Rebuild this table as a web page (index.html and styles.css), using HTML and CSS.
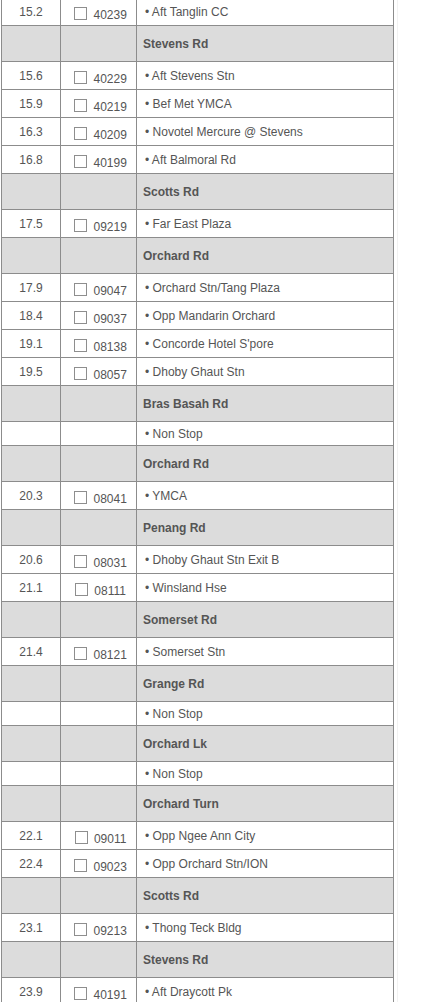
FILE: index.html
```html
<!DOCTYPE html>
<html>
<head>
<meta charset="utf-8">
<link rel="stylesheet" href="styles.css">
</head>
<body>
<div class="wrap">
<table class="route">
<colgroup><col class="c1"><col class="c2"><col class="c3"></colgroup>
<tbody>
<tr class="stop"><td class="km">15.2</td><td class="code"><span class="cb"></span> 40239</td><td class="name">• Aft Tanglin CC</td></tr>
<tr class="road"><td></td><td></td><td class="rname">Stevens Rd</td></tr>
<tr class="stop"><td class="km">15.6</td><td class="code"><span class="cb"></span> 40229</td><td class="name">• Aft Stevens Stn</td></tr>
<tr class="stop"><td class="km">15.9</td><td class="code"><span class="cb"></span> 40219</td><td class="name">• Bef Met YMCA</td></tr>
<tr class="stop"><td class="km">16.3</td><td class="code"><span class="cb"></span> 40209</td><td class="name">• Novotel Mercure @ Stevens</td></tr>
<tr class="stop"><td class="km">16.8</td><td class="code"><span class="cb"></span> 40199</td><td class="name">• Aft Balmoral Rd</td></tr>
<tr class="road"><td></td><td></td><td class="rname">Scotts Rd</td></tr>
<tr class="stop"><td class="km">17.5</td><td class="code"><span class="cb"></span> 09219</td><td class="name">• Far East Plaza</td></tr>
<tr class="road"><td></td><td></td><td class="rname">Orchard Rd</td></tr>
<tr class="stop"><td class="km">17.9</td><td class="code"><span class="cb"></span> 09047</td><td class="name">• Orchard Stn/Tang Plaza</td></tr>
<tr class="stop"><td class="km">18.4</td><td class="code"><span class="cb"></span> 09037</td><td class="name">• Opp Mandarin Orchard</td></tr>
<tr class="stop"><td class="km">19.1</td><td class="code"><span class="cb"></span> 08138</td><td class="name">• Concorde Hotel S'pore</td></tr>
<tr class="stop"><td class="km">19.5</td><td class="code"><span class="cb"></span> 08057</td><td class="name">• Dhoby Ghaut Stn</td></tr>
<tr class="road"><td></td><td></td><td class="rname">Bras Basah Rd</td></tr>
<tr class="nonstop"><td></td><td></td><td class="name">• Non Stop</td></tr>
<tr class="road"><td></td><td></td><td class="rname">Orchard Rd</td></tr>
<tr class="stop"><td class="km">20.3</td><td class="code"><span class="cb"></span> 08041</td><td class="name">• YMCA</td></tr>
<tr class="road"><td></td><td></td><td class="rname">Penang Rd</td></tr>
<tr class="stop"><td class="km">20.6</td><td class="code"><span class="cb"></span> 08031</td><td class="name">• Dhoby Ghaut Stn Exit B</td></tr>
<tr class="stop"><td class="km">21.1</td><td class="code"><span class="cb"></span> 08111</td><td class="name">• Winsland Hse</td></tr>
<tr class="road"><td></td><td></td><td class="rname">Somerset Rd</td></tr>
<tr class="stop"><td class="km">21.4</td><td class="code"><span class="cb"></span> 08121</td><td class="name">• Somerset Stn</td></tr>
<tr class="road"><td></td><td></td><td class="rname">Grange Rd</td></tr>
<tr class="nonstop"><td></td><td></td><td class="name">• Non Stop</td></tr>
<tr class="road"><td></td><td></td><td class="rname">Orchard Lk</td></tr>
<tr class="nonstop"><td></td><td></td><td class="name">• Non Stop</td></tr>
<tr class="road"><td></td><td></td><td class="rname">Orchard Turn</td></tr>
<tr class="stop"><td class="km">22.1</td><td class="code"><span class="cb"></span> 09011</td><td class="name">• Opp Ngee Ann City</td></tr>
<tr class="stop"><td class="km">22.4</td><td class="code"><span class="cb"></span> 09023</td><td class="name">• Opp Orchard Stn/ION</td></tr>
<tr class="road"><td></td><td></td><td class="rname">Scotts Rd</td></tr>
<tr class="stop"><td class="km">23.1</td><td class="code"><span class="cb"></span> 09213</td><td class="name">• Thong Teck Bldg</td></tr>
<tr class="road"><td></td><td></td><td class="rname">Stevens Rd</td></tr>
<tr class="stop"><td class="km">23.9</td><td class="code"><span class="cb"></span> 40191</td><td class="name">• Aft Draycott Pk</td></tr>
</tbody>
</table>
</div>
</body>
</html>
```

FILE: styles.css
```css
html, body {
  margin: 0;
  padding: 0;
  background: #ffffff;
}

body {
  font-family: "Liberation Sans", Arial, sans-serif;
  font-size: 12px;
  color: #555555;
  overflow: hidden;
}

.wrap {
  width: 396px;
  padding-left: 1px;
  border-right: 1px solid #f2f2f2;
  margin-top: -3px;
}

.route {
  border-collapse: collapse;
  table-layout: fixed;
  width: 392px;
}

.c1 { width: 59px; }
.c2 { width: 76px; }
.c3 { width: 257px; }

.route td {
  border: 1px solid #8c8c8c;
  padding: 0;
  vertical-align: middle;
  white-space: nowrap;
}

.route .stop td { height: 27px; }
.route .road td { height: 35px; background: #dcdcdc; }
.route .nonstop td { height: 23px; }

.route .km { text-align: center; }

.route .code { text-align: center; }

.cb {
  display: inline-block;
  box-sizing: border-box;
  width: 13px;
  height: 13px;
  margin: 5px 3px 0 4px;
  vertical-align: -1px;
  border: 1px solid #8e8e8e;
  background: #ffffff;
}

.route .name { padding-left: 8px; }

.route .rname {
  padding-left: 6px;
  font-weight: bold;
}
```
